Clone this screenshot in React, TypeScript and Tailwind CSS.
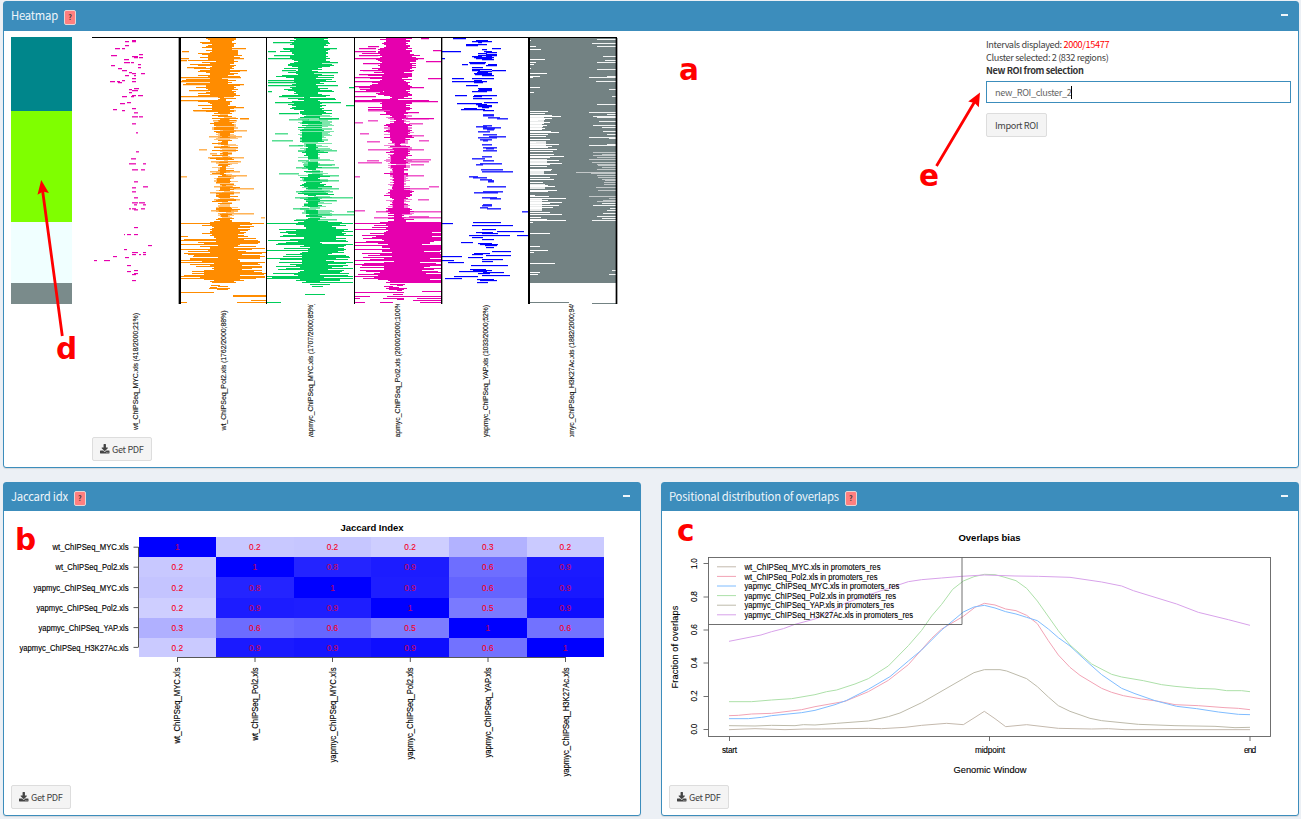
import React from "react";
import { FaDownload } from "react-icons/fa";

type Seg = [number, number, number];

/* Peak segments: [row, start, end] in thirds of a pixel. */
const MYC: Seg[] = [
  [121,396,408],[124,396,408],[125,375,387],[136,375,387],[145,345,360],[145,366,375],[163,417,429],[166,333,351],[169,396,414],[172,402,414],[172,417,429],
  [178,372,387],[187,372,390],[187,393,402],[193,414,423],[196,333,345],[202,414,423],[205,354,366],[211,366,381],[217,387,396],[220,396,408],[220,423,435],
  [226,375,387],[226,402,408],[235,396,408],[241,366,375],[244,330,345],[244,351,360],[244,396,408],[247,354,366],[265,402,417],[268,387,396],[271,396,414],
  [277,387,396],[286,396,408],[286,414,429],[289,366,381],[289,393,402],[307,381,393],[310,360,375],[325,396,408],[328,339,351],[331,366,375],[337,402,414],
  [349,396,414],[349,417,429],[370,396,408],[397,408,414],[454,408,417],[474,393,408],[489,387,408],[489,429,438],[507,396,414],[507,423,435],[543,402,414],
  [558,429,444],[561,396,408],[573,396,408],[593,402,414],[607,396,414],[607,417,435],[614,402,411],[614,429,438],[624,387,393],[624,396,408],[624,423,435],
  [629,402,414],[683,402,414],[702,381,393],[702,402,414],[704,372,375],[736,444,456],[748,372,381],[757,396,414],[757,429,438],[763,396,408],[763,417,423],
  [763,429,438],[769,339,351],[771,375,387],[781,282,291],[781,312,330],[796,381,393],[811,402,414],[814,381,393],[819,402,414],[823,396,408],[841,396,408],
];
const YAP: Seg[] = [
  [115,399,437],[120,467,503],[123,455,515],[128,473,485],[133,439,500],[136,439,475],[145,515,543],[147,485,500],[154,367,424],[154,493,515],[157,497,530],
  [160,473,500],[163,497,530],[166,475,530],[169,457,485],[169,497,515],[172,463,521],[175,367,375],[175,467,515],[178,487,521],[187,447,497],[190,449,495],
  [193,427,445],[193,503,530],[196,497,530],[202,457,490],[208,457,515],[211,455,480],[211,515,557],[214,475,515],[217,470,503],[220,463,515],[223,465,515],
  [226,487,521],[235,397,433],[235,455,521],[241,461,485],[244,397,500],[247,463,490],[256,439,475],[265,475,515],[268,477,515],[271,475,515],[274,455,500],
  [286,405,440],[286,461,530],[289,460,485],[295,460,515],[307,493,535],[310,411,485],[313,467,500],[316,473,515],[319,475,515],[322,485,507],[325,433,470],
  [328,423,495],[331,490,521],[343,490,521],[346,490,521],[353,503,540],[356,530,563],[376,490,515],[379,467,500],[382,490,542],[385,490,525],[388,500,521],[395,475,510],
  [403,490,530],[409,508,557],[412,475,530],[418,480,515],[422,490,503],[433,487,515],[443,490,530],[446,497,521],[452,490,530],[468,487,515],[474,455,495],
  [480,490,521],[489,480,545],[492,467,490],[507,482,550],[514,487,578],[529,447,475],[532,460,500],[537,480,515],[541,503,521],[544,503,521],[558,500,557],[573,490,550],
  [576,461,535],[591,487,530],[596,510,543],[614,490,515],[617,485,515],[622,480,505],[624,500,543],[635,607,625],[668,460,543],[671,367,400],[677,455,579],
  [688,487,528],[694,530,611],[697,467,518],[701,487,535],[706,447,570],[706,591,625],[713,455,490],[719,487,521],[728,423,460],[731,475,515],[734,480,535],
  [737,495,530],[741,497,521],[755,515,573],[760,463,510],[763,455,490],[766,497,573],[769,367,427],[773,445,490],[778,485,550],[781,367,403],[785,485,520],
  [787,385,433],[796,453,563],[808,450,497],[811,460,515],[814,417,500],[817,490,552],[820,475,510],[826,485,570],[829,401,475],[835,376,425],[838,470,521],
  [841,480,530],[846,470,505],
];
/* White gaps of the H3K27Ac column: [row, edge]. */
const GAP_L: [number, number][] = [
  [121,633],[139,648],[148,663],[178,675],[187,648],[193,642],[205,633],[220,681],[229,660],[232,640],[262,660],[277,642],[334,684],[339,675],[345,695],[349,723],
  [354,695],[358,675],[361,655],[366,690],[370,672],[375,680],[379,670],[384,675],[388,665],[393,693],[396,717],[402,684],[409,678],[418,690],[427,648],[433,717],
  [438,697],[443,684],[449,712],[453,700],[463,702],[468,732],[473,690],[482,718],[489,726],[493,690],[498,680],[507,697],[512,692],[523,711],[532,690],[537,702],
  [546,668],[555,684],[560,705],[570,712],[575,684],[585,645],[590,688],[595,738],[600,684],[606,726],[611,690],[616,718],[621,700],[626,665],[637,690],[642,726],
  [652,663],[657,680],[662,738],[668,640],[701,690],[739,660],[750,684],[756,642],[790,705],[817,660],[823,655],
];
const GAP_R: [number, number][] = [
  [118,830],[130,815],[139,830],[169,848],[181,855],[187,830],[208,830],[229,862],[232,807],[244,827],[268,868],[289,875],[313,830],[337,807],[343,860],[350,820],
  [353,830],[365,838],[375,820],[381,845],[395,850],[402,862],[411,808],[415,868],[433,860],[436,808],[456,820],[462,845],[467,820],[472,830],[479,807],[486,815],
  [492,830],[497,835],[502,845],[508,830],[516,768],[521,812],[526,830],[532,835],[537,845],[542,855],[548,853],[553,853],[562,828],[571,835],[588,807],[594,868],
  [600,850],[605,830],[611,845],[617,818],[626,870],[630,860],[641,850],[650,830],[655,845],[662,815],[811,875],[823,868],
];

const bar = (x1: number, x2: number, y: number, h = 1) => `M${x1} ${y}H${x2}v${h}H${x1}z`;
const segPath = (segs: Seg[], dx: number, from = 0, to = 999, dy = 0) =>
  segs
    .filter(([y]) => y >= from && y < to)
    .map(([y, a, b]) => bar(Math.round(dx + a / 3), Math.round(dx + b / 3), Math.floor((y + dy) / 3)))
    .join("");

function rng(seed: number) {
  let s = seed;
  return () => {
    s = (s * 1664525 + 1013904223) % 4294967296;
    return s / 4294967296;
  };
}

/* Band: [first row, core left, core right, outer left, outer right, streak chance left, streak chance right]. */
type Band = [number, number, number, number, number, number, number];

function density(left: number, right: number, bands: Band[], seed: number, gaps: number) {
  const r = rng(seed);
  let solid = "";
  let faint = "";
  for (let y = 38; y < 283; y++) {
    const b = [...bands].reverse().find((k) => y >= k[0]) ?? bands[0];
    const inB = y >= 114 && y < 218;
    let x1 = b[1] + 2 - r() * 6;
    let x2 = b[2] - 2 + r() * 6;
    if (r() < b[5]) x1 = b[1] - r() * (b[1] - b[3]);
    if (r() < b[6]) x2 = b[2] + Math.sqrt(r()) * (b[4] - b[2]);
    x1 = Math.max(left, Math.round(x1 / 2) * 2);
    x2 = Math.min(right, Math.round(x2 / 2) * 2);
    if (inB) {
      const kind = r();
      if (kind < gaps) faint += bar(x1 + 4, x2, y);
      else {
        solid += bar(Math.max(x1, b[1]), Math.min(x2, b[2]), y);
        if (kind < 0.7) faint += bar(x1, x2, y);
        else solid += bar(x1, x2, y);
      }
    } else {
      solid += bar(x1, x2, y);
    }
  }
  return { solid, faint };
}

const ORANGE = density(180, 266, [
  [38,211,233,196,238,0.5,0.4],[48,214,226,205,240,0.5,0.5],[52,209,236,198,243,0.5,0.4],[60,216,231,188,240,0.7,0.5],[66,210,231,193,240,0.5,0.5],[75,209,224,182,240,0.7,0.6],
  [84,209,233,190,240,0.6,0.4],[96,220,226,192,238,0.6,0.6],[101,214,229,196,236,0.6,0.6],[112,219,229,212,238,0.6,0.5],[122,214,234,211,238,0.5,0.4],[132,220,230,208,238,0.5,0.5],
  [141,221,228,211,238,0.5,0.4],[147,217,235,212,239,0.4,0.5],[152,223,228,209,240,0.6,0.6],[158,219,230,209,240,0.5,0.5],[166,220,226,209,237,0.5,0.5],[176,217,231,212,238,0.3,0.3],
  [183,222,226,210,240,0.5,0.5],[188,219,230,211,238,0.4,0.5],[204,219,231,210,240,0.6,0.5],[212,221,228,212,236,0.5,0.4],[218,219,230,210,238,0.5,0.5],
  [222,212,238,182,254,0.5,0.7],[228,213,236,190,252,0.5,0.7],[238,218,230,180,262,0.7,0.8],[249,219,232,182,266,0.7,0.8],[259,216,240,190,262,0.7,0.7],[270,206,238,182,266,0.7,0.6],[279,214,235,200,246,0.6,0.4],
], 17, 0.22);
const GREEN = density(267, 354, [
  [38,294,324,278,330,0.4,0.5],[60,297,320,282,334,0.5,0.5],[70,301,312,284,332,0.6,0.6],[75,296,318,275,336,0.6,0.6],[84,298,318,284,334,0.6,0.5],[95,303,312,282,336,0.6,0.6],
  [101,295,321,286,328,0.5,0.5],[110,303,320,294,334,0.6,0.6],[122,302,322,298,334,0.5,0.6],[135,302,322,298,334,0.4,0.4],[142,306,316,296,334,0.7,0.6],[150,305,318,298,332,0.6,0.6],
  [156,308,318,296,334,0.5,0.5],[170,308,320,297,334,0.6,0.6],[177,304,320,296,332,0.4,0.5],[186,308,318,298,334,0.6,0.6],[190,300,324,296,330,0.4,0.5],[194,308,318,298,336,0.6,0.7],[207,306,318,294,334,0.6,0.7],
  [222,306,320,275,348,0.7,0.7],[230,305,332,276,350,0.6,0.6],[241,308,322,270,352,0.7,0.8],[252,304,324,276,350,0.6,0.7],[264,303,328,276,348,0.6,0.7],[274,298,322,268,352,0.7,0.7],[281,308,322,300,352,0.6,0.6],
], 93, 0.28);
const MAGENTA = density(355, 441, [
  [38,386,408,368,412,0.5,0.3],[50,380,411,360,420,0.4,0.5],[58,382,410,364,418,0.5,0.5],[70,382,404,360,414,0.6,0.5],[84,382,406,358,412,0.5,0.5],[96,390,400,360,412,0.6,0.6],
  [100,383,407,366,412,0.4,0.5],[109,390,406,376,412,0.5,0.6],[118,394,404,386,412,0.4,0.5],[123,390,408,384,414,0.5,0.5],[136,391,405,384,414,0.4,0.5],[143,395,401,382,412,0.6,0.7],
  [148,393,408,384,413,0.4,0.5],[156,391,406,384,412,0.3,0.4],[168,393,404,382,410,0.5,0.5],[180,393,404,384,412,0.4,0.6],[190,390,410,382,414,0.4,0.5],[197,393,404,384,412,0.4,0.5],
  [208,388,410,380,416,0.4,0.4],[214,394,402,384,414,0.6,0.6],
  [222,388,430,355,455,0.7,1],[232,386,420,358,460,0.7,0.95],[242,390,420,355,455,0.8,0.9],[252,392,430,357,455,0.7,0.9],[262,386,420,358,450,0.6,0.9],[272,380,420,358,460,0.5,0.95],[280,392,420,380,455,0.6,0.9],
], 41, 0.02);

/* Long single-interval streaks. */
const STREAKS_A: Seg[][] = [
  [[43,120,210],[52,18,40],[73,12,40],[73,120,205],[79,12,32],[100,33,90],[109,120,213],[130,12,195],[142,12,130],[151,20,205],[169,38,100],[187,12,170],[200,12,120],[221,150,205],[229,50,110],[252,193,218]],
  [[25,290,460],[43,320,483],[52,275,300],[64,295,450],[73,275,440],[85,380,487],[109,318,360],[115,400,485],[139,275,450],[145,275,420],[153,275,485],[160,519,533],[171,275,287],[187,310,380],[193,380,478],[205,297,495],[213,510,533],[237,310,370],[252,430,490]],
  [[13,735,760],[37,575,610],[43,548,600],[49,770,795],[52,537,600],[64,548,605],[73,537,745],[82,750,795],[88,560,610],[109,560,712],[121,548,600],[130,537,600],[133,755,795],[142,537,620],[157,537,600],[160,548,745],[172,537,620],[187,537,600],[199,537,760],[203,537,785],[226,575,700],[235,640,730],[252,690,775]],
];
const STREAKS_B: Seg[][] = [
  [[1,53,180],[24,193,218],[30,110,182],[61,140,213],[79,100,198],[117,68,93],[130,102,124],[141,95,204],[153,105,195],[183,102,192],[195,140,213],[198,12,32],[228,115,172],[234,172,234],[246,102,192],[268,115,192],[300,105,186],[311,125,234],[323,256,268]],
  [[25,430,490],[28,340,400],[70,297,335],[91,289,350],[107,340,380],[121,365,482],[150,365,400],[162,380,476],[173,360,488],[183,400,440],[189,310,370],[192,400,440],[195,400,488],[212,380,488],[234,390,488],[243,360,470],[261,358,532],[270,390,482],[296,350,400],[305,513,533],[313,400,533],[327,360,482]],
  [[1,575,650],[25,680,760],[30,577,606],[36,537,560],[40,700,740],[70,552,580],[76,680,745],[91,728,760],[93,573,613],[118,575,745],[147,690,766],[150,573,610],[156,545,617],[154,690,760],[162,705,745],[195,690,745],[198,537,553],[228,760,788],[234,690,760],[268,725,760],[300,537,566],[305,600,795],[318,700,760],[323,595,795]],
];
const STREAKS_C: Seg[][] = [
  [[25,12,265],[64,12,35],[70,120,240],[88,12,100],[100,150,268],[103,12,120],[124,50,268],[130,42,250],[136,12,170],[142,12,268],[154,60,200],[184,12,266],[187,120,268],[190,12,60]],
  [[25,273,532],[43,310,420],[49,440,532],[61,320,532],[76,275,480],[88,300,532],[106,273,500],[124,320,520],[130,273,480],[142,310,532],[154,300,500],[160,400,532],[175,290,520],[184,273,532],[190,273,532],[202,380,532]],
  [[25,537,795],[43,537,795],[70,560,795],[82,537,700],[91,537,795],[103,537,795],[127,560,795],[136,537,795],[148,537,795],[178,545,795],[184,537,795],[190,560,795]],
];
const ORANGE_END: Seg[] = [[856,633,660],[859,655,685],[862,630,650],[865,628,690],[868,652,684],[876,540,642],[886,700,798],[889,700,798],[900,753,798],[907,540,560],[908,710,798]];
const GREEN_END: Seg[] = [[853,930,990],[859,937,969],[883,914,975],[907,801,843]];
const MAG_END: Seg[] = [
  [853,1170,1215],[856,1190,1208],[859,1152,1180],[862,1167,1197],[865,1158,1220],[868,1168,1212],[871,1190,1206],[874,1265,1322],[877,1066,1212],[883,1180,1210],[889,1066,1110],[889,1160,1322],
  [895,1066,1080],[895,1150,1211],[898,1190,1213],[895,1250,1322],[901,1240,1322],[907,1066,1095],[907,1140,1180],[908,1260,1322],
];
const ENDS = [ORANGE_END, GREEN_END, MAG_END];

const HEAT_LABELS: [number, number, string, number][] = [
  [138, 371.5, "wt_ChIPSeq_MYC.xls (418/2000;21%)", 117],
  [226, 370.5, "wt_ChIPSeq_Pol2.xls (1762/2000;88%)", 120],
  [312.5, 370.5, "yapmyc_ChIPSeq_MYC.xls (1707/2000;85%)", 136],
  [400, 370.5, "yapmyc_ChIPSeq_Pol2.xls (2000/2000;100%)", 141],
  [488, 371, "yapmyc_ChIPSeq_YAP.xls (1033/2000;52%)", 132],
  [574, 371, "yapmyc_ChIPSeq_H3K27Ac.xls (1882/2000;94%)", 149],
];

function Heatmap() {
  const cols = [
    { d: ORANGE, c: "#ff8c00" },
    { d: GREEN, c: "#00cd5a" },
    { d: MAGENTA, c: "#e600ae" },
  ];
  return (
    <svg className="block h-[400px] w-[526px]" viewBox="92 37 526 400" fontFamily="'Liberation Sans', sans-serif">
      <g shapeRendering="crispEdges">
        {[
          { s: MYC, dx: 0, c: "#e600ae" },
          { s: YAP, dx: 320, c: "#0000ff" },
        ].map(({ s, dx, c }) => (
          <g key={c} fill={c}>
            <path d={segPath(s, dx, 0, 335, 3)} opacity={0.25} />
            <path d={segPath(s, dx, 335, 668, 3)} opacity={0.45} />
            <path d={segPath(s, dx, 668, 999, 3)} opacity={0.15} />
            <path d={segPath(s, dx, 335, 668)} opacity={0.8} />
            <path d={segPath(s, dx, 0, 335) + segPath(s, dx, 668, 999)} />
          </g>
        ))}
        {cols.map(({ d, c }, i) => (
          <g key={c} fill={c}>
            <path d={d.faint} opacity={0.5} />
            <path d={segPath(STREAKS_B[i], 176, 0, 999, 330)} opacity={0.65} />
            <path d={segPath(STREAKS_B[i], 176, 0, 999, 333)} opacity={0.35} />
            <path d={segPath(STREAKS_A[i], 176, 0, 999, 105)} opacity={0.25} />
            <path d={d.solid} />
            <path d={segPath(STREAKS_A[i], 176, 0, 999, 102) + segPath(STREAKS_C[i], 176, 0, 999, 645) + segPath(ENDS[i], 0)} />
          </g>
        ))}
        <rect x={529} y={38} width={88} height={245} fill="#738283" />
        {[[115, 9, 14], [122, 7, 12], [141, 5, 16], [159, 4, 17], [170, 5, 14], [184, 5, 15], [199, 12, 12]].map(([y, h, w]) => (
          <rect key={y} x={530} y={y} width={w} height={h} fill="#fff" opacity={0.85} />
        ))}
        {GAP_L.map(([y, x]) => (
          <path key={`l${y}`} d={bar(530, Math.round(320 + x / 3), Math.floor(y / 3))} fill="#fff" />
        ))}
        {GAP_R.map(([y, x]) => (
          <path key={`r${y}`} d={bar(Math.round(320 + x / 3), 616, Math.floor(y / 3))} fill={y > 450 && y < 610 ? "#c3c8c9" : "#f2f4f4"} />
        ))}
        <path d={bar(530, 569, 302) + bar(592, 616, 303)} fill="#738283" />
        <path d="M92 37h525v1h-525z M179 37h2v267h-2z M266 37h1v267h-1z M354 37h1v267h-1z M441 37h1v267h-1z M528 37h2v267h-2z M616 37h1v267h-1z" />
        <path d="M178 38h1v266h-1z M442 38h1v266h-1z M615 38h1v266h-1z M617 38h1v266h-1z" opacity={0.35} />
      </g>
      <clipPath id="labels">
        <rect x={92} y={304} width={526} height={133} />
      </clipPath>
      <g clipPath="url(#labels)" fontSize={7} fill="#111" stroke="#111" strokeWidth={0.12}>
        {HEAT_LABELS.map(([x, y, t, len]) => (
          <text key={t} transform={`translate(${x} ${y}) rotate(-90)`} textAnchor="middle" textLength={len}>
            {t}
          </text>
        ))}
      </g>
    </svg>
  );
}

const NAMES: [string, number][] = [
  ["wt_ChIPSeq_MYC.xls", 76],
  ["wt_ChIPSeq_Pol2.xls", 73],
  ["yapmyc_ChIPSeq_MYC.xls", 95],
  ["yapmyc_ChIPSeq_Pol2.xls", 92],
  ["yapmyc_ChIPSeq_YAP.xls", 90],
  ["yapmyc_ChIPSeq_H3K27Ac.xls", 109],
];
const JACCARD = [
  ["1", "0.2", "0.2", "0.2", "0.3", "0.2"],
  ["0.2", "1", "0.8", "0.9", "0.6", "0.9"],
  ["0.2", "0.8", "1", "0.9", "0.6", "0.9"],
  ["0.2", "0.9", "0.9", "1", "0.5", "0.9"],
  ["0.3", "0.6", "0.6", "0.5", "1", "0.6"],
  ["0.2", "0.9", "0.9", "0.9", "0.6", "1"],
];
const SHADES = [
  [0, 200, 198, 206, 178, 202],
  [200, 0, 36, 28, 110, 26],
  [196, 36, 0, 30, 100, 24],
  [206, 28, 30, 0, 122, 14],
  [176, 108, 102, 124, 0, 114],
  [202, 26, 22, 14, 114, 0],
];
const ROWS = [537, 557, 577, 598, 618, 638, 657];
const COLS = [138.5, 216, 293.7, 371.2, 449, 526.5, 604];
const BASELINES = [550, 570, 591, 611, 631, 650.5];

function JaccardPlot() {
  return (
    <svg className="block h-[266px] w-[622px]" viewBox="11 518 622 266" fontFamily="'Liberation Sans', sans-serif">
      <text x={372} y={531} fontSize={9.5} fontWeight="bold" textAnchor="middle" textLength={63}>
        Jaccard Index
      </text>
      <g shapeRendering="crispEdges">
        {SHADES.map((row, r) =>
          row.map((s, c) => (
            <rect key={`${r}-${c}`} x={COLS[c]} y={ROWS[r]} width={COLS[c + 1] - COLS[c]} height={ROWS[r + 1] - ROWS[r]} fill={`rgb(${s},${s},255)`} />
          )),
        )}
      </g>
      <g fill="#f5001e" fontSize={8.3} textAnchor="middle" stroke="#f5001e" strokeWidth={0.1}>
        {JACCARD.map((row, r) =>
          row.map((v, c) => (
            <text key={`${r}-${c}`} x={(COLS[c] + COLS[c + 1]) / 2} y={BASELINES[r]} opacity={SHADES[r][c] < 60 ? 0.75 : 1}>
              {v}
            </text>
          )),
        )}
      </g>
      <path d="M138.5 547v100M133.5 547.2h5M133.5 567.2h5M133.5 587.6h5M133.5 607.6h5M133.5 627.6h5M133.5 647.4h5" stroke="#555" fill="none" />
      <path d="M177.3 657.5h388M177.5 657v5M255 657v5M332.5 657v5M410.3 657v5M488 657v5M565.5 657v5" stroke="#444" strokeWidth={0.9} fill="none" />
      <g fontSize={8.7} textAnchor="end" fill="#000" stroke="#000" strokeWidth={0.15}>
        {NAMES.map(([n, w], i) => (
          <text key={n} x={128.5} y={BASELINES[i]} textLength={w} lengthAdjust="spacingAndGlyphs">
            {n}
          </text>
        ))}
        {NAMES.map(([n, w], i) => (
          <text key={n + "v"} transform={`translate(${180.3 + i * 77.65} 667.5) rotate(-90)`} textLength={w} lengthAdjust="spacingAndGlyphs">
            {n}
          </text>
        ))}
      </g>
    </svg>
  );
}

/* Curve vertices in thirds of a pixel. */
const CURVES: [string, string][] = [
  ["#c4b9ad", "222,764 300,761 390,764 450,762 500,762 640,760 680,761 750,757 800,751 875,745 925,749 960,727 988,709 1020,731 1052,755 1115,749 1210,760 1310,762 1360,761 1410,764 1785,764"],
  ["#f2a3b5", "222,722 250,721 290,717 350,715 440,704 480,695 570,679 640,650 700,616 760,569 830,490 860,462 925,424 960,397 988,385 1020,390 1052,402 1083,407 1115,421 1147,446 1180,497 1210,540 1245,577 1275,601 1340,640 1370,652 1405,662 1460,672 1505,678 1560,689 1630,692 1710,698 1750,700 1785,704"],
  ["#7fbcff", "222,731 280,731 320,727 350,722 440,713 480,706 540,689 575,676 640,643 705,605 760,558 800,525 860,465 925,411 957,396 988,391 1020,399 1052,410 1083,417 1115,427 1147,437 1180,462 1210,488 1245,513 1305,568 1340,599 1400,640 1440,656 1500,677 1565,694 1625,701 1690,711 1750,718 1785,719"],
  ["#ade0a9", "222,680 290,680 350,675 410,671 480,659 515,650 545,645 600,627 640,611 700,573 760,512 800,466 830,423 860,388 893,343 925,318 957,305 988,298 1020,299 1050,307 1083,317 1115,340 1147,378 1210,467 1245,510 1310,567 1370,598 1400,606 1465,617 1520,629 1560,634 1625,640 1680,642 1715,647 1760,647 1785,650"],
  ["#bdbaaa", "222,752 300,753 350,751 420,752 445,749 480,750 545,745 640,738 700,725 735,714 800,683 925,611 957,593 988,584 1035,584 1055,588 1115,611 1147,635 1180,666 1210,692 1245,709 1305,730 1340,737 1450,748 1560,752 1680,754 1740,758 1785,757"],
  ["#d8a2ea", "222,499 318,480 350,470 385,461 420,448 480,432 520,415 570,385 625,365 700,340 760,320 800,314 860,309 920,304 988,300 1020,301 1080,303 1150,304 1245,307 1340,321 1400,333 1435,347 1565,387 1630,412 1720,434 1785,451"],
];
const LEGEND_W = [136, 133, 155, 151.5, 149.5, 168.5];

function OverlapPlot() {
  return (
    <svg className="block h-[266px] w-[622px]" viewBox="669 518 622 266" fontFamily="'Liberation Sans', sans-serif" fill="#000">
      <text x={989.5} y={541} fontSize={9.5} fontWeight="bold" textAnchor="middle" textLength={62}>
        Overlaps bias
      </text>
      <g transform="translate(655 475) scale(0.33333)" fill="none" strokeWidth={3}>
        {CURVES.map(([c, pts]) => (
          <polyline key={c} points={pts} stroke={c} />
        ))}
      </g>
      <g fill="none" stroke="#606060" strokeWidth={0.9}>
        <rect x={708.5} y={557.5} width={562} height={179} />
        <path d="M708.5 624.5h253.5v-67" />
        <path d="M703.5 563.5h5M703.5 597h5M703.5 630h5M703.5 663h5M703.5 696.5h5M703.5 729.5h5M729.5 736v5M989.5 736v5M1250 736v5" />
      </g>
      {NAMES.map(([n], i) => (
        <g key={n}>
          <path d={`M717 ${566.8 + i * 9.6}h19`} stroke={CURVES[i][0]} />
          <text x={744.5} y={569.9 + i * 9.6} fontSize={8.5} textLength={LEGEND_W[i]} lengthAdjust="spacingAndGlyphs" stroke="#000" strokeWidth={0.12}>
            {n} in promoters_res
          </text>
        </g>
      ))}
      <g fontSize={8.3} textAnchor="middle" stroke="#000" strokeWidth={0.12}>
        {["0.0", "0.2", "0.4", "0.6", "0.8", "1.0"].map((t, i) => (
          <text key={t} transform={`translate(697 ${729 - i * 33.1}) rotate(-90)`} textLength={11}>
            {t}
          </text>
        ))}
        <text x={729.5} y={753} textLength={15}>start</text>
        <text x={990} y={753} textLength={30}>midpoint</text>
        <text x={1250} y={753} textLength={12}>end</text>
      </g>
      <g fontSize={9.3} textAnchor="middle" stroke="#000" strokeWidth={0.12}>
        <text x={990} y={773} textLength={73}>Genomic Window</text>
        <text transform="translate(678 647) rotate(-90)" textLength={83}>Fraction of overlaps</text>
      </g>
    </svg>
  );
}

function PdfButton() {
  return (
    <button className="flex h-[24px] w-[60px] items-center justify-center gap-[2px] rounded-[2px] border border-[#dddddd] bg-[#f4f4f4] text-[9.2px] leading-none tracking-[-0.35px] text-[#444]">
      <FaDownload className="size-[9.5px]" />
      <span className="mt-px">Get PDF</span>
    </button>
  );
}

function Panel({ title, head, className, children }: { title: string; head: string; className: string; children: React.ReactNode }) {
  return (
    <section className={`flex flex-col rounded-[3px] border border-[#3c8dbc] bg-white shadow-[0_1px_1px_rgba(0,0,0,0.1)] ${className}`}>
      <header className={`flex shrink-0 items-center bg-[#3c8dbc] pr-[10px] pb-px pl-[7px] text-white ${head}`}>
        <h3 className="text-[11.3px] leading-none tracking-[-0.23px] text-[#eef5fa]">{title}</h3>
        <span className="mt-[3px] ml-[6px] flex h-[15px] w-[12px] items-center justify-center rounded-[2px] border border-[#e6d5d5] bg-[#ff7f7f] text-[7px] leading-none font-bold text-[#333]">
          ?
        </span>
        <span className="mb-[2px] ml-auto h-[2px] w-[7px] bg-[#eef5fa]" />
      </header>
      {children}
    </section>
  );
}

const LETTERS: [string, number, number][] = [
  ["a", 679, 80],
  ["b", 15, 550],
  ["c", 677, 541],
  ["d", 56, 359],
  ["e", 919, 186],
];

function Annotations() {
  return (
    <svg className="pointer-events-none absolute top-0 left-0 h-[819px] w-[1301px]" viewBox="0 0 1301 819" fill="#f00">
      <g fontFamily="'DejaVu Sans', sans-serif" fontWeight="bold" fontSize={29.5}>
        {LETTERS.map(([l, x, y]) => (
          <text key={l} x={x} y={y}>
            {l}
          </text>
        ))}
      </g>
      <path d="M62.3 336L42.5 190M936.5 166L974.5 102" stroke="#f00" strokeWidth={2.8} fill="none" />
      <path d="M41.2 180l7.7 13-5.8-1.6-5.6 3.3zM980 92.5l-1.2 14.7-4.2-4.2-6.4-1.5z" />
    </svg>
  );
}

export default function App() {
  return (
    <div className="relative flex h-[819px] w-[1301px] flex-col overflow-hidden bg-[#ecf0f5] pt-px pr-[2px] pl-[3px] font-['Noto_Sans_CJK_SC','Noto_Sans',sans-serif] text-[#444]">
      <Panel title="Heatmap" head="h-[29px]" className="h-[467px] w-[1296px]">
        <div className="flex flex-1 pt-[6px] pl-[7px]">
          <div className="flex h-[267px] w-[61px] flex-col">
            <div className="h-[74px] bg-[#00868b]" />
            <div className="h-[111px] bg-[#7fff00]" />
            <div className="h-[61px] bg-[#f0ffff]" />
            <div className="flex-1 bg-[#7a8b8b]" />
          </div>
          <div className="ml-[20px] flex w-[526px] flex-col">
            <Heatmap />
            <PdfButton />
          </div>
          <div className="ml-[368px] flex w-[305px] flex-col pt-px text-[9.2px] leading-[13px] tracking-[-0.38px]">
            <p>
              Intervals displayed: <span className="text-[#ff0000]">2000/15477</span>
            </p>
            <p>Cluster selected: 2 (832 regions)</p>
            <p className="font-bold text-[#333]">New ROI from selection</p>
            <div className="mt-[4px] flex h-[22px] items-center border border-[#3c8dbc] pl-[8px] text-[#666]">
              <span>new_ROI_cluster_2</span>
              <span className="h-[13px] w-px bg-black" />
            </div>
            <button className="mt-[10px] h-[24px] w-[61px] rounded-[2px] border border-[#dddddd] bg-[#f4f4f4] pt-px leading-none">
              Import ROI
            </button>
          </div>
        </div>
      </Panel>
      <div className="mt-[14px] flex gap-[20px]">
        <Panel title="Jaccard idx" head="h-[28px]" className="h-[334px] w-[638px]">
          <div className="flex flex-col gap-px pt-[7px] pl-[7px]">
            <JaccardPlot />
            <PdfButton />
          </div>
        </Panel>
        <Panel title="Positional distribution of overlaps" head="h-[28px]" className="h-[334px] w-[638px]">
          <div className="flex flex-col gap-px pt-[7px] pl-[7px]">
            <OverlapPlot />
            <PdfButton />
          </div>
        </Panel>
      </div>
      <Annotations />
    </div>
  );
}
